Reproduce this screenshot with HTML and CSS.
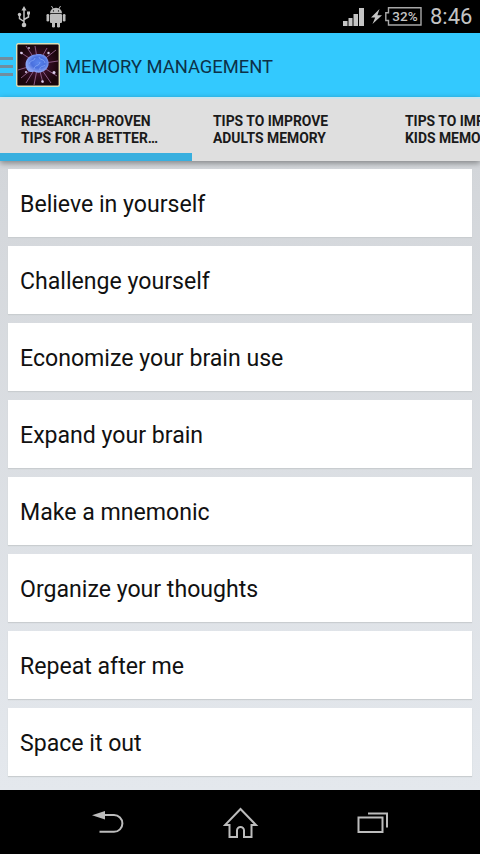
FILE: index.html
```html
<!DOCTYPE html>
<html lang="en">
<head>
  <meta charset="UTF-8" />
  <meta name="viewport" content="width=device-width, initial-scale=1.0"/>
  <title>Memory Management</title>
  <link rel="stylesheet" href="styles.css">
</head>
<body>
  <div class="status-bar">
    <svg class="usb" width="14" height="22" viewBox="0 0 14 22" fill="none" stroke="#c4c4c4" stroke-width="1.5">
      <path d="M7 3v15M2.500 9v3.500L7 15.500M11.500 7.500v3.500L7 13.500"/>
      <path d="M7 0l2.500 4.500h-5z" fill="#c4c4c4" stroke="none"/>
      <circle cx="7" cy="19" r="2.300" fill="#c4c4c4" stroke="none"/>
      <circle cx="2.500" cy="8.500" r="1.700" fill="#c4c4c4" stroke="none"/>
      <path d="M10 5.500h3v3h-3z" fill="#c4c4c4" stroke="none"/>
    </svg>
    <svg class="android" width="20" height="22" viewBox="0 0 20 22" fill="#bdbdbd">
      <path d="M4 7.200a6 5.500 0 0 1 12 0z"/>
      <path d="M5.500 0l2 3.500M14.500 0l-2 3.500" stroke="#bdbdbd" stroke-width="1"/>
      <rect x="4" y="8" width="12" height="9" rx="1"/>
      <rect x="0.500" y="8" width="2.700" height="7.500" rx="1.300"/>
      <rect x="16.800" y="8" width="2.700" height="7.500" rx="1.300"/>
      <rect x="6" y="15" width="3" height="6.500" rx="1.300"/>
      <rect x="11" y="15" width="3" height="6.500" rx="1.300"/>
      <circle cx="7.500" cy="4.900" r="0.600" fill="#000"/>
      <circle cx="12.500" cy="4.900" r="0.600" fill="#000"/>
    </svg>
    <div class="spacer"></div>
    <svg class="signal" width="22" height="19" viewBox="0 0 22 19" fill="#c4c4c4">
      <path d="M0 14h4.500v5H0zM5.500 11h4v8h-4zM10.500 7h4.500v12h-4.500zM16 1h5v18h-5z"/>
    </svg>
    <svg class="bolt" width="11" height="15" viewBox="0 0 11 15" fill="#c4c4c4">
      <path d="M8.500 0L0 8.500h4.200L1.500 15 11 6.200H6.400z"/>
    </svg>
    <div class="battery">
      <svg width="37" height="19" viewBox="0 0 37 19" fill="none" stroke="#a8a8a8" stroke-width="1.400">
        <path d="M3.500 .8H36v17.200H3.500v-4.500H.8V5.800h2.700z"/>
      </svg>
      <span>32%</span>
    </div>
    <div class="clock">8:46</div>
  </div>

  <header class="action-bar">
    <div class="drawer"><i></i><i></i><i></i></div>
    <svg class="app-icon" width="44" height="44" viewBox="0 0 44 44">
      <defs>
        <radialGradient id="space">
          <stop offset="0" stop-color="#5c2048"/>
          <stop offset="0.600" stop-color="#2e0c1e"/>
          <stop offset="1" stop-color="#1a050b"/>
        </radialGradient>
        <radialGradient id="brain" cx="0.550" cy="0.450">
          <stop offset="0" stop-color="#5a86ee"/>
          <stop offset="0.600" stop-color="#4a70de"/>
          <stop offset="1" stop-color="#86a0f2"/>
        </radialGradient>
      </defs>
      <rect x="0.700" y="0.700" width="42.600" height="42.600" rx="1.500" fill="url(#space)" stroke="#dce0b8" stroke-width="1.400"/>
      <g stroke="#94628f" stroke-width="0.900" fill="none">
        <path d="M22 21L10 3M22 21L19 3M22 21L31 5M22 21L40 7M22 21L4 9M22 21L42 18M22 21L2 27M22 21L10 40M22 21L18 42M22 21L27 40M22 21L35 40M22 21L41 33M22 21L5 35"/>
      </g>
      <path d="M9.500 22c0-6 4-10 10-10.500 6-1.500 11 1 12.500 5.500 2 5-1 10-5 11.500-4 2-7 1-9 0-4 2-8-1-8.500-6.500z" fill="url(#brain)"/>
      <path d="M13 21c2-5 5-2 6-6M18 26c1-5 5-2 6-7M23 14c1 4 5 1 6 6M24 27c-1-4 3-3 5-5" fill="none" stroke="#86a8f8" stroke-width="0.800"/>
      <g fill="#dbcdeb">
        <circle cx="5.500" cy="10" r="1.300"/>
        <circle cx="32.500" cy="10" r="1.200"/>
        <circle cx="38" cy="29.500" r="1.500"/>
        <circle cx="26.500" cy="38.500" r="1.300"/>
        <circle cx="10" cy="29" r="1"/>
        <circle cx="13" cy="5" r="0.900"/>
      </g>
    </svg>
    <h1>MEMORY MANAGEMENT</h1>
  </header>

  <nav class="tabs">
    <div class="tab active">RESEARCH-PROVEN<br>TIPS FOR A BETTER…</div>
    <div class="tab">TIPS TO IMPROVE<br>ADULTS MEMORY</div>
    <div class="tab">TIPS TO IMPROVE<br>KIDS MEMORY</div>
  </nav>

  <main class="list">
    <div class="card">Believe in yourself</div>
    <div class="card">Challenge yourself</div>
    <div class="card">Economize your brain use</div>
    <div class="card">Expand your brain</div>
    <div class="card">Make a mnemonic</div>
    <div class="card">Organize your thoughts</div>
    <div class="card">Repeat after me</div>
    <div class="card">Space it out</div>
  </main>

  <footer class="nav-bar">
    <svg width="32" height="24" viewBox="0 0 32 24" fill="none" stroke="#bcbcbc" stroke-width="2">
      <path d="M12 4h10a8.400 8.400 0 0 1 0 16.800H7.500"/>
      <path d="M0 4.300L13 0v8.600z" fill="#bcbcbc" stroke="none"/>
    </svg>
    <svg width="36" height="32" viewBox="0 0 36 32" fill="none" stroke="#bcbcbc" stroke-width="2">
      <path d="M17.500 2L2 18h4.500v12h7.500v-6.500a3.500 3.500 0 0 1 7 0V30h7.500V18H33z"/>
    </svg>
    <svg width="32" height="22" viewBox="0 0 32 22" fill="none" stroke="#bcbcbc" stroke-width="2">
      <path d="M1.500 5.500h24v14.500h-24zM11 1.500h19v14"/>
    </svg>
  </footer>
</body>
</html>
```
FILE: styles.css
```css
* { margin: 0; padding: 0; box-sizing: border-box; }

html, body {
  height: 100%;
  overflow: hidden;
  font-family: Roboto, sans-serif;
  background-color: #000;
}

body {
  display: flex;
  flex-direction: column;
}

svg {
  display: block;
  flex: none;
}

.status-bar {
  display: flex;
  align-items: center;
  height: 33px;
  flex: none;
  padding: 0 8px 0 17px;
  color: #c4c4c4;
}

.android {
  margin-left: 15px;
}

.spacer {
  flex: 1;
}

.bolt {
  margin: 0 3px 0 6px;
}

.battery {
  display: grid;
  width: 37px;
  height: 19px;
}

.battery svg,
.battery span {
  grid-area: 1 / 1;
}

.battery span {
  padding-left: 3px;
  font-size: 13.500px;
  font-weight: 500;
  line-height: 19px;
  text-align: center;
}

.clock {
  width: 42px;
  margin-left: 8px;
  font-size: 22px;
  line-height: 35px;
  white-space: nowrap;
}

.action-bar {
  display: flex;
  align-items: center;
  height: 64px;
  flex: none;
  background: #33c9fe;
}

.drawer {
  display: flex;
  flex-direction: column;
  gap: 5px;
  width: 13px;
  margin-right: 3px;
  padding-top: 2px;
}

.drawer i {
  height: 3px;
  background: #708e9f;
}

.action-bar h1 {
  margin-left: 5px;
  padding-top: 2px;
  font-size: 18.350px;
  font-weight: 400;
  color: #0c3148;
  white-space: nowrap;
}

.tabs {
  display: flex;
  height: 64px;
  flex: none;
  position: relative;
  overflow: hidden;
  background: #dfdfdf;
  border-top: 2px solid #cbe5ee;
  box-shadow: 0 2px 6px rgba(0, 0, 0, 0.4);
}

.tab {
  width: 192px;
  flex: none;
  padding: 14px 0 0 21px;
  font-size: 13.900px;
  font-weight: 700;
  line-height: 17px;
  color: #1a1a1a;
  white-space: nowrap;
}

.tab.active {
  border-bottom: 8px solid #38afdf;
}

.list {
  display: flex;
  flex-direction: column;
  gap: 9px;
  flex: 1;
  padding: 8px 8px 0;
  background: linear-gradient(#d3d6da, #e4e8ed);
}

.card {
  height: 68px;
  padding-left: 12px;
  font-size: 23.100px;
  line-height: 72px;
  color: #111;
  background: #fff;
  box-shadow: 0 1px 1px #c9cdd0;
}

.nav-bar {
  display: flex;
  align-items: center;
  justify-content: space-between;
  height: 64px;
  flex: none;
  padding: 2px 91px 0 92px;
  background: #000;
}
```
